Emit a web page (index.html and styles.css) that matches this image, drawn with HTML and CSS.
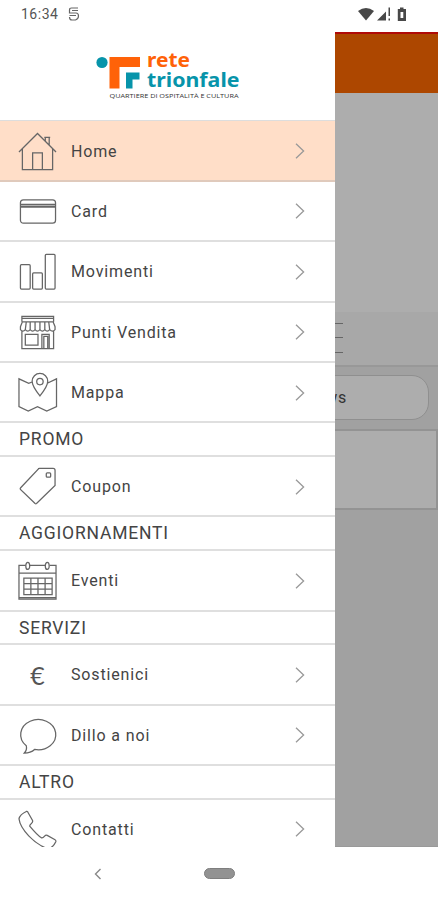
FILE: index.html
```html
<!DOCTYPE html>
<html lang="it">
<head>
  <meta charset="UTF-8">
  <meta name="viewport" content="width=device-width, initial-scale=1.0">
  <title>Rete Trionfale</title>
  <link rel="stylesheet" href="styles.css">
</head>
<body>
  <header class="status-bar">
    <span class="time">16:34</span>
    <svg class="status-left" width="12" height="14" viewBox="0 0 12 14"><path d="M10 1H3.5Q1.5 1 1.5 3V6H8Q10.500 6 10.500 9T7.500 13H4Q1.500 13 1.500 10M1.500 8.500H8M4 3.500H10" /></svg>
    <svg class="status-right" width="52" height="18" viewBox="0 0 52 18">
      <path d="M0 5Q8 -1 16 5L8 14.500Z" />
      <path d="M19 14.500L28 5.500V14.500ZM30.500 1.500H32V10H30.500ZM30.500 12.500H32V14.500H30.500Z" />
      <path fill-rule="evenodd" d="M42 1.500H45.500V3H48V15H39.800V3H42ZM42.500 6V12H45.300V6Z" />
    </svg>
  </header>

  <div class="screen">
    <main class="content">
      <div class="app-bar"></div>
      <div class="hero"></div>
      <div class="toolbar">
        <div class="burger"><i></i><i></i><i></i></div>
      </div>
      <div class="filters">
        <div class="pill"></div>
        <div class="pill">News</div>
      </div>
      <div class="box"></div>
    </main>

    <nav class="drawer">
      <div class="logo">
        <svg width="150" height="66" viewBox="0 -12 150 66">
          <circle cx="9" cy="14.500" r="5.600" fill="#0794aa" />
          <path fill="#ff6208" d="M16.500 9H47V19H26.500V40.500H16.500Z" />
          <path fill="#0794aa" d="M33 24.500H46.500V31.500H39.500V40.500H33Z" />
          <text class="logo-name" x="54" y="19" fill="#ff6208" textLength="43" lengthAdjust="spacingAndGlyphs">rete</text>
          <text class="logo-name" x="54" y="38.800" fill="#0794aa" textLength="92.500" lengthAdjust="spacingAndGlyphs">trionfale</text>
          <text class="logo-sub" x="16.500" y="50" textLength="129" lengthAdjust="spacingAndGlyphs">QUARTIERE DI OSPITALITÀ E CULTURA</text>
        </svg>
      </div>

      <a class="item active">
        <svg class="icon" viewBox="0 0 40 40"><path d="M1 20.500L20 1.500L39 20.500M4.500 17.500V38.500H35.500V17.500M15 38.500V21.500H25V38.500M28 9V5.500H32V13.500M27 5.500H33" /></svg>
        <span>Home</span>
        <svg class="arrow" viewBox="0 0 10 16"><path d="M1 .8L8.600 8L1 15.200" /></svg>
      </a>
      <a class="item">
        <svg class="icon" viewBox="0 0 40 40"><rect x="2.500" y="8" width="36" height="24" rx="3" /><path d="M2.500 12.800H38.500" /><path class="thick" d="M2.500 15H38.500" /></svg>
        <span>Card</span>
        <svg class="arrow" viewBox="0 0 10 16"><path d="M1 .8L8.600 8L1 15.200" /></svg>
      </a>
      <a class="item">
        <svg class="icon" viewBox="0 0 40 40"><rect x="2.500" y="13" width="10" height="25" rx="1" /><rect x="15" y="21.500" width="10" height="16.500" rx="1" /><rect x="28" y="2.500" width="10" height="35.500" rx="1" /></svg>
        <span>Movimenti</span>
        <svg class="arrow" viewBox="0 0 10 16"><path d="M1 .8L8.600 8L1 15.200" /></svg>
      </a>
      <a class="item">
        <svg class="icon" viewBox="0 0 40 40"><path d="M4 18V36.500H36.500V18M4 9V3.500H36.500V9M4 5.500H36.500M4.500 9H36L38 14V17Q35.500 20 32.500 17Q30 20 27.500 17Q25 20 22.500 17Q20 20 17.500 17Q15 20 12.500 17Q10 20 7.500 17Q5 20 2.500 17V14ZM7.500 17L8.500 9M12.500 17V9M17.500 17V9M22.500 17V9M27.500 17V9M32.500 17L31.500 9M7.500 22H20.500V33H7.500ZM24.500 36.500V22H32V36.500M26.500 36V24H30.500V36" /></svg>
        <span>Punti Vendita</span>
        <svg class="arrow" viewBox="0 0 10 16"><path d="M1 .8L8.600 8L1 15.200" /></svg>
      </a>
      <a class="item">
        <svg class="icon" viewBox="0 0 40 40"><path d="M15 9L11 10.500L1 6V34.500L10.500 39L20 34.500L29.500 39L39.500 34.500V6L30 10.500M22.500 23.500Q14.500 13.500 14.500 8.500A8 8 0 0 1 30.500 8.500Q30.500 13.500 22.500 23.500Z" /><circle cx="22.500" cy="8.800" r="3.300" /></svg>
        <span>Mappa</span>
        <svg class="arrow" viewBox="0 0 10 16"><path d="M1 .8L8.600 8L1 15.200" /></svg>
      </a>

      <h2 class="section">PROMO</h2>
      <a class="item">
        <svg class="icon" viewBox="0 0 40 40"><path d="M22 1.500H36Q38 1.500 38 3.500V19L19 37.500Q18.300 38 17.500 37.500L2.500 23Q2 22 2.500 21.500L20.500 2.500Q21 1.500 22 1.500Z" /><rect x="29" y="6" width="4.500" height="4.500" rx="1" /></svg>
        <span>Coupon</span>
        <svg class="arrow" viewBox="0 0 10 16"><path d="M1 .8L8.600 8L1 15.200" /></svg>
      </a>

      <h2 class="section">AGGIORNAMENTI</h2>
      <a class="item">
        <svg class="icon" viewBox="0 0 40 40"><path d="M8 4.500H1V39H39V4.500H32.500M12 4.500H28M1 12.500H39M1 37.500H39M6 17.500H35V34.500H6ZM6 23.200H35M6 28.800H35M13.200 17.500V34.500M20.500 17.500V34.500M27.800 17.500V34.500" /><ellipse cx="10" cy="5" rx="2" ry="3.700" /><ellipse cx="30" cy="5" rx="2" ry="3.700" /></svg>
        <span>Eventi</span>
        <svg class="arrow" viewBox="0 0 10 16"><path d="M1 .8L8.600 8L1 15.200" /></svg>
      </a>

      <h2 class="section">SERVIZI</h2>
      <a class="item">
        <b class="icon euro">€</b>
        <span>Sostienici</span>
        <svg class="arrow" viewBox="0 0 10 16"><path d="M1 .8L8.600 8L1 15.200" /></svg>
      </a>
      <a class="item">
        <svg class="icon" viewBox="0 0 40 40"><path d="M8.500 30.500A18 15.500 0 1 1 17 34.300Q13 38 6.500 38Q9.500 35 8.500 30.500Z" /></svg>
        <span>Dillo a noi</span>
        <svg class="arrow" viewBox="0 0 10 16"><path d="M1 .8L8.600 8L1 15.200" /></svg>
      </a>

      <h2 class="section">ALTRO</h2>
      <a class="item">
        <svg class="icon" viewBox="0 0 40 40"><path d="M8.500 1.500Q2 4.500 1 9Q2 17 11 26.500T30 39.500Q35 40 38.800 32.500Q39 31 38 30.500L30 26Q28.500 25.500 27 27Q25.500 29 24 28.500Q20 26 12 16.500Q12 15 14 13.500Q15.500 12 14.800 10.500L10 2Q9.500 1.200 8.500 1.500Z" /></svg>
        <span>Contatti</span>
        <svg class="arrow" viewBox="0 0 10 16"><path d="M1 .8L8.600 8L1 15.200" /></svg>
      </a>
    </nav>
  </div>

  <footer class="nav-bar">
    <svg class="back" width="8" height="12" viewBox="0 0 8 12"><path d="M6.500 1L1.500 6L6.500 11" /></svg>
    <div class="home-btn"></div>
  </footer>
</body>
</html>
```

FILE: styles.css
```css
* {
  box-sizing: border-box;
}
body {
  margin: 0;
  width: 438px;
  height: 900px;
  display: flex;
  flex-direction: column;
  overflow: hidden;
  background: #fff;
  color: #444;
  font-family: Roboto, sans-serif;
}

/* status bar */
.status-bar {
  height: 32px;
  flex: none;
  display: flex;
  align-items: center;
  padding: 0 30px 4px 21px;
}
.time {
  font-size: 14px;
  letter-spacing: 0.5px;
  color: #555;
}
.status-left {
  margin-left: 10px;
  fill: none;
  stroke: #666;
  stroke-width: 1.2;
}
.status-right {
  margin: 1px -2px 0 auto;
  fill: #484848;
}

.screen {
  position: relative;
  height: 815px;
  flex: none;
  overflow: hidden;
}

/* dimmed page behind the drawer */
.content {
  height: 100%;
  background: #a1a1a1;
  border-bottom: 1px solid #999;
}
.app-bar {
  height: 61px;
  background: #ad4700;
  border-top: 2px solid #b00b08;
}
.hero {
  height: 219px;
  background: #adadad;
}
.toolbar {
  height: 55px;
  display: flex;
  align-items: center;
  justify-content: flex-end;
  padding-right: 95px;
  background: #a8a8a8;
  border-bottom: 2px solid #989898;
}
.burger {
  width: 29px;
  display: flex;
  flex-direction: column;
  gap: 13.5px;
  padding-bottom: 2px;
}
.burger i {
  height: 1px;
  background: #666;
}
.filters {
  height: 62px;
  display: flex;
  gap: 6px;
  padding: 8px 9px;
}
.pill {
  flex: 1;
  height: 45px;
  display: flex;
  align-items: center;
  justify-content: center;
  border: 1px solid #8f8f8f;
  border-radius: 17px;
  background: #adadad;
  color: #333;
  font-size: 16px;
  letter-spacing: 0.8px;
}
.box {
  height: 81px;
  background: #adadad;
  border: 2px solid #939393;
}

/* drawer */
.drawer {
  position: absolute;
  top: 0;
  left: 0;
  width: 335px;
  height: 815px;
  overflow: hidden;
  background: #fff;
}
.logo {
  height: 89.4px;
  padding: 4px 0 0 93px;
  border-bottom: 1px solid #ddd;
}
.logo svg {
  display: block;
}
.logo-name {
  font: bold 20px "Noto Sans", sans-serif;
}
.logo-sub {
  font: 6px "Open Sans", sans-serif;
  fill: #333;
}
.item {
  height: 60.4px;
  display: flex;
  align-items: center;
  padding: 1px 30px 0 18px;
  border-bottom: 2px solid #dfdfdf;
}
.item.active {
  background: #ffdec8;
  border-color: #e0cabc;
}
.item span {
  flex: 1;
  margin-left: 14px;
  font-size: 16px;
  letter-spacing: 0.85px;
}
.icon {
  width: 39px;
  height: 39px;
  flex: none;
  overflow: visible;
  fill: none;
  stroke: #666;
  stroke-width: 1.3;
}
.icon .thick {
  stroke-width: 2.5;
}
.euro {
  display: flex;
  align-items: center;
  justify-content: center;
  font-family: Lato, sans-serif;
  font-size: 25px;
  font-weight: 400;
  color: #555;
}
.arrow {
  width: 10px;
  height: 16px;
  fill: none;
  stroke: #999;
  stroke-width: 1.3;
}
.section {
  height: 33.7px;
  margin: 0;
  padding: 1px 19px 0;
  border-bottom: 2px solid #dfdfdf;
  font-size: 17.5px;
  font-weight: 400;
  line-height: 31px;
  letter-spacing: 0.8px;
}

/* system navigation */
.nav-bar {
  flex: 1;
  display: flex;
  align-items: center;
  padding-left: 94px;
}
.back {
  fill: none;
  stroke: #888;
  stroke-width: 1.4;
}
.home-btn {
  width: 31px;
  height: 11px;
  margin-left: 102px;
  border-radius: 6px;
  background: #929292;
  border: 1px solid #7e7e7e;
}
```
